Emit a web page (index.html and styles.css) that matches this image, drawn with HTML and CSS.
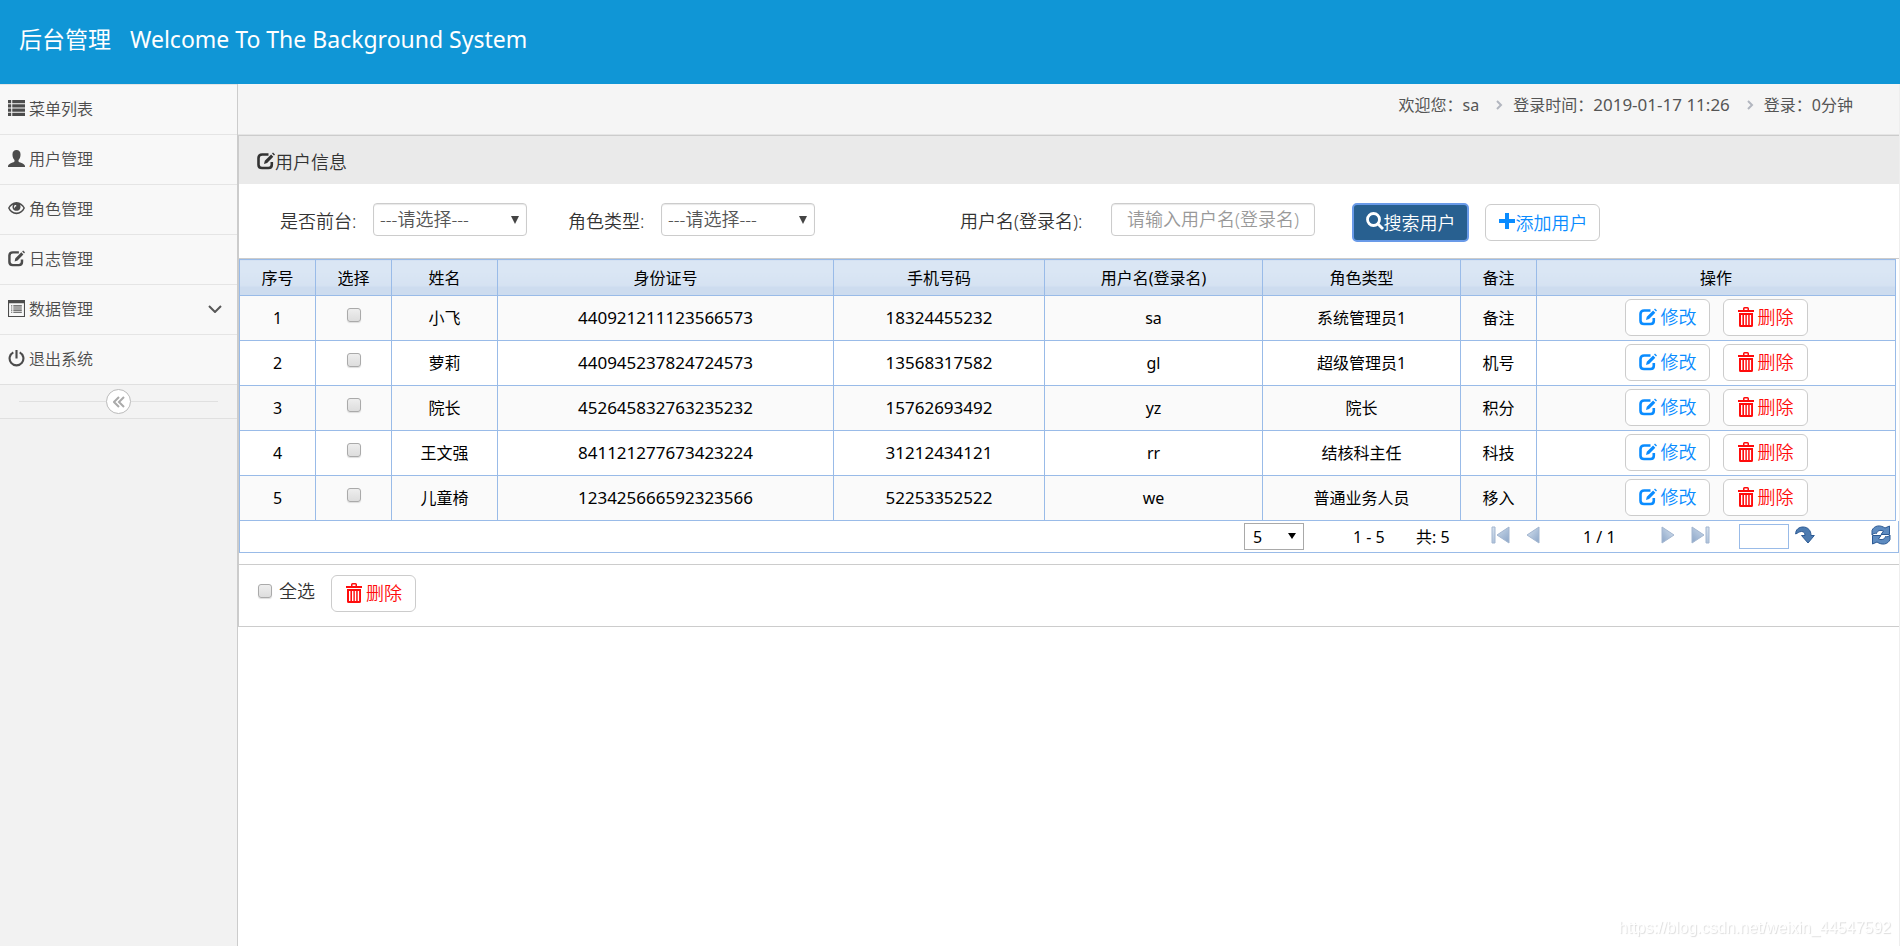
FILE: index.html
```html
<!DOCTYPE html>
<html lang="zh">
<head>
<meta charset="utf-8">
<title>后台管理</title>
<link rel="stylesheet" href="styles.css">
</head>
<body>
<svg class="sprite" aria-hidden="true">
  <symbol id="list" viewBox="0 0 16 16"><path d="M0 0h3v3H0zM4 0h12v3H4zM0 4h3v3H0zM4 4h12v3H4zM0 8h3v3H0zM4 8h12v3H4zM0 12h3v3H0zM4 12h12v3H4z"/></symbol>
  <symbol id="user" viewBox="0 0 16 16"><path d="M8 0c2.400 0 3.800 1.600 3.800 4.200 0 2.200-.8 4.200-1.900 5.200v1.400c0 .7 5.600 1.700 6.100 4.200v1H0v-1c.5-2.500 6.100-3.500 6.100-4.200V9.400C5 8.400 4.200 6.400 4.200 4.200 4.200 1.600 5.600 0 8 0z"/></symbol>
  <symbol id="eye" viewBox="0 0 18 14"><path fill-rule="evenodd" d="M9 0c4 0 7 2.500 9 6.500C16 10.800 13 13 9 13S2 10.800 0 6.500C2 2.500 5 0 9 0zM5.200 3C3.600 3.900 2.500 5 1.700 6.500c1.600 3 4 4.800 7.300 4.800s5.700-1.800 7.300-4.800c-.8-1.500-1.900-2.600-3.500-3.500 1.500 4-1 6.500-3.800 6.500S3.700 7 5.200 3zM7 3.500C6.300 4.500 6 6 6.800 7c.2-1.500.9-2.200 2-2.400.3-1-.8-1.700-1.800-1.100z"/></symbol>
  <symbol id="edit" viewBox="0 0 18 17"><path fill="none" stroke="currentColor" stroke-width="2.600" d="M11.500 2H5.200Q1.500 2 1.500 5.500v6.800Q1.500 15.500 5 15.500h6.500q3.300 0 3.300-3.200V9.500"/><path d="M7 11.600l.8-3.300 6.300-6.300 2.200 2.200-6.200 6.400zM15 1.100L16 0l2 1.900-1 1.200z"/></symbol>
  <symbol id="table" viewBox="0 0 16 16"><path fill-rule="evenodd" d="M0 0h16v16H0zM1 3v12h14V3zM3 5h1v1H3zM5 5h8v1H5zM3 7h1v1H3zM5 7h8v1H5zM3 9h1v1H3zM5 9h8v1H5zM3 11h1v1H3zM5 11h8v1H5z"/></symbol>
  <symbol id="power" viewBox="0 0 16 16"><path fill="none" stroke="currentColor" stroke-width="2" d="M5 2.200a6.500 6.500 0 1 0 6 0"/><path d="M7 0h2v8H7z"/></symbol>
  <symbol id="search" viewBox="0 0 18 18"><circle cx="7.500" cy="7.500" r="6" fill="none" stroke="currentColor" stroke-width="2.800"/><path d="M10.500 12.500l2-2 5.500 5.500-2 2z"/></symbol>
  <symbol id="plus" viewBox="0 0 18 18"><path d="M7 1h4v6h6v4h-6v6H7v-6H1V7h6z"/></symbol>
  <symbol id="trash" viewBox="0 0 16 20"><path fill-rule="evenodd" d="M5 3V1.500Q5 0 6.500 0h3Q11 0 11 1.500V3h5v2H0V3zM6.500 3h3V1.500h-3zM1 6h14v12.500q0 1.500-1.500 1.500h-11Q1 20 1 18.500zM3 8v10h1.400V8zM6 8v10h1.400V8zM8.800 8v10h1.400V8zM11.700 8v10h1.400V8z"/></symbol>
  <linearGradient id="steel" x1="0" y1="0" x2="1" y2="1"><stop offset="0" stop-color="#d9e4f0"/><stop offset="1" stop-color="#8aa5c8"/></linearGradient>
  <symbol id="prev" viewBox="0 0 14 18"><path fill="url(#steel)" stroke="#a3b6d0" d="M13 1v16L1 9z"/></symbol>
  <symbol id="first" viewBox="0 0 19 18"><path fill="url(#steel)" stroke="#a3b6d0" d="M18 1v16L6 9zM1 1h3v16H1z"/></symbol>
  <symbol id="go" viewBox="0 0 20 18"><path fill="#4d7bb0" stroke="#2c5a94" d="M.7 8C.5 3.500 4 1 8 1c5 0 8 3.500 8 8.500h3.300L13 17 6.500 9.500H10C10 7 9 5.500 6.500 5.500 4 5.500 3 7 .7 8z"/></symbol>
  <symbol id="reload" viewBox="0 0 20 20"><path fill="#5e8bc0" stroke="#2c5a94" d="M1 10V5.500C3 .5 9-.5 14 3l4.500-2v8.500H10L12.500 6C9 4.500 6 6 5.500 8.500 4 8 2 8.500 1 10zM19 10v4.500C17 19.500 11 20.500 6 17l-4.500 2v-8.500H10L7.500 14c3.500 1.500 6.500 0 7-2.500 1.500.5 3.500 0 4.500-1.500z"/></symbol>
</svg>
<header class="top"><h1><span>后台管理</span><span>Welcome To The Background System</span></h1></header>
<div class="layout">
  <aside class="side">
    <nav>
      <a href="#"><svg class="ic"><use href="#list"/></svg>菜单列表</a>
      <a href="#"><svg class="ic"><use href="#user"/></svg>用户管理</a>
      <a href="#"><svg class="ic"><use href="#eye"/></svg>角色管理</a>
      <a href="#"><svg class="ic"><use href="#edit"/></svg>日志管理</a>
      <a href="#"><svg class="ic"><use href="#table"/></svg>数据管理<svg class="down" viewBox="0 0 14 8"><path d="M1 1l6 6 6-6"/></svg></a>
      <a href="#"><svg class="ic"><use href="#power"/></svg>退出系统</a>
    </nav>
    <div class="collapse"><button type="button" aria-label="收起"><svg viewBox="0 0 12 12"><path d="M6 1L1 6l5 5M11 1L6 6l5 5"/></svg></button></div>
  </aside>
  <main class="main">
    <div class="crumbs">
      <span>欢迎您：sa</span><svg class="sep" viewBox="0 0 7 10"><path d="M1 1l4 4-4 4"/></svg>
      <span>登录时间：<time>2019-01-17 11:26</time></span><svg class="sep" viewBox="0 0 7 10"><path d="M1 1l4 4-4 4"/></svg>
      <span>登录：0分钟</span>
    </div>
    <section class="panel">
      <h2><svg class="ic"><use href="#edit"/></svg>用户信息</h2>
      <form class="filter">
        <label for="front">是否前台:</label>
        <div class="pick front"><select id="front"><option>---请选择---</option></select></div>
        <label for="role">角色类型:</label>
        <div class="pick role"><select id="role"><option>---请选择---</option></select></div>
        <label for="login">用户名(登录名):</label>
        <input id="login" type="text" placeholder="请输入用户名(登录名)">
        <button type="button" class="btn search"><svg class="ic"><use href="#search"/></svg>搜索用户</button>
        <button type="button" class="btn add"><svg class="ic"><use href="#plus"/></svg>添加用户</button>
      </form>
      <table class="grid">
        <colgroup><col class="c-no"><col class="c-no"><col class="c-name"><col class="c-id"><col class="c-tel"><col class="c-login"><col class="c-role"><col class="c-no"><col></colgroup>
        <thead><tr><th>序号</th><th>选择</th><th>姓名</th><th>身份证号</th><th>手机号码</th><th>用户名(登录名)</th><th>角色类型</th><th>备注</th><th>操作</th></tr></thead>
        <tbody>
          <tr><td>1</td><td><input type="checkbox" aria-label="选择 1"></td><td>小飞</td><td class="num">440921211123566573</td><td class="num">18324455232</td><td>sa</td><td>系统管理员1</td><td>备注</td><td><div class="acts"><button type="button" class="btn edit"><svg class="ic"><use href="#edit"/></svg>修改</button><button type="button" class="btn del"><svg class="ic"><use href="#trash"/></svg>删除</button></div></td></tr>
          <tr><td>2</td><td><input type="checkbox" aria-label="选择 2"></td><td>萝莉</td><td class="num">440945237824724573</td><td class="num">13568317582</td><td>gl</td><td>超级管理员1</td><td>机号</td><td><div class="acts"><button type="button" class="btn edit"><svg class="ic"><use href="#edit"/></svg>修改</button><button type="button" class="btn del"><svg class="ic"><use href="#trash"/></svg>删除</button></div></td></tr>
          <tr><td>3</td><td><input type="checkbox" aria-label="选择 3"></td><td>院长</td><td class="num">452645832763235232</td><td class="num">15762693492</td><td>yz</td><td>院长</td><td>积分</td><td><div class="acts"><button type="button" class="btn edit"><svg class="ic"><use href="#edit"/></svg>修改</button><button type="button" class="btn del"><svg class="ic"><use href="#trash"/></svg>删除</button></div></td></tr>
          <tr><td>4</td><td><input type="checkbox" aria-label="选择 4"></td><td>王文强</td><td class="num">841121277673423224</td><td class="num">31212434121</td><td>rr</td><td>结核科主任</td><td>科技</td><td><div class="acts"><button type="button" class="btn edit"><svg class="ic"><use href="#edit"/></svg>修改</button><button type="button" class="btn del"><svg class="ic"><use href="#trash"/></svg>删除</button></div></td></tr>
          <tr><td>5</td><td><input type="checkbox" aria-label="选择 5"></td><td>儿童椅</td><td class="num">123425666592323566</td><td class="num">52253352522</td><td>we</td><td>普通业务人员</td><td>移入</td><td><div class="acts"><button type="button" class="btn edit"><svg class="ic"><use href="#edit"/></svg>修改</button><button type="button" class="btn del"><svg class="ic"><use href="#trash"/></svg>删除</button></div></td></tr>
        </tbody>
      </table>
      <div class="pager">
        <div class="pick size"><select aria-label="每页"><option>5</option></select></div>
        <span class="range">1 - 5</span><span class="total">共: 5</span>
        <button type="button" class="nav" aria-label="首页"><svg class="wide"><use href="#first"/></svg></button>
        <button type="button" class="nav" aria-label="上一页"><svg><use href="#prev"/></svg></button>
        <span class="page">1 / 1</span>
        <button type="button" class="nav flip" aria-label="下一页"><svg><use href="#prev"/></svg></button>
        <button type="button" class="nav flip" aria-label="末页"><svg class="wide"><use href="#first"/></svg></button>
        <input type="text" aria-label="页码">
        <button type="button" class="nav go" aria-label="跳转"><svg class="big"><use href="#go"/></svg></button>
        <button type="button" class="nav reload" aria-label="刷新"><svg class="big"><use href="#reload"/></svg></button>
      </div>
      <div class="bulk">
        <label><input type="checkbox">全选</label>
        <button type="button" class="btn del"><svg class="ic"><use href="#trash"/></svg>删除</button>
      </div>
    </section>
  </main>
</div>
<div class="mark">https://blog.csdn.net/weixin_44547592</div>
</body>
</html>
```
FILE: styles.css
```css
* { box-sizing: border-box; }
body {
  margin: 0;
  min-height: 100vh;
  display: flex;
  flex-direction: column;
  font: 16px/24px "Noto Sans", "Noto Sans CJK SC", sans-serif;
  color: #333;
  background: #fff;
}
button, input, select { font: inherit; color: inherit; margin: 0; }
.sprite { position: absolute; width: 0; height: 0; }
.ic { width: 18px; height: 18px; fill: currentColor; flex: none; }
.top { height: 84px; padding: 21px 19px; background: #1096d6; color: #fff; }
.top h1 { margin: 0; display: flex; gap: 19px; font-size: 23px; line-height: 36px; font-weight: 400; }
.layout { flex: 1; display: flex; }
.side { width: 238px; flex: none; background: #f2f2f2; border-right: 1px solid #ccc; font-weight: 350; }
.side a {
  display: flex; align-items: center; gap: 4px; height: 50px; padding: 0 15px 2px 8px;
  border-top: 1px solid #e5e5e5; background: #f8f8f8; color: #4c4c4c; text-decoration: none;
}
.side .ic { width: 17px; height: 17px; margin-bottom: 1px; }
.down { width: 14px; height: 8px; margin-left: auto; fill: none; stroke: #585858; stroke-width: 2; }
.collapse {
  height: 35px; display: flex; align-items: center; gap: 0; padding: 0 19px;
  border: solid #e0e0e0; border-width: 1px 0; background: #f3f3f3;
}
.collapse::before, .collapse::after { content: ""; flex: 1; height: 1px; background: #e0e0e0; }
.collapse button {
  width: 25px; height: 25px; padding: 0; border: 1px solid #bbb; border-radius: 50%; background: #fff;
  display: grid; place-items: center;
}
.collapse svg { width: 12px; height: 12px; fill: none; stroke: #aaa; stroke-width: 2; }
.main { flex: 1; min-width: 0; border-right: 1px solid #eee; }
.crumbs {
  height: 51px; display: flex; justify-content: flex-end; align-items: center; padding: 0 46px 8px 0;
  background: #f5f5f5; border-bottom: 1px solid #e5e5e5; color: #555;
}
time, .num { font-size: 17px; }
.sep { width: 7px; height: 10px; margin: 0 10px 0 17px; fill: none; stroke: #b2b6bf; stroke-width: 2; }
.panel { border: solid #ccc; border-width: 1px 0 1px 1px; }
.panel h2 {
  margin: 0; height: 48px; padding: 4px 18px 0; display: flex; align-items: center;
  font-size: 18px; font-weight: 350; background: #eaeaea;
}
.panel h2 .ic { margin-bottom: 3px; }
.filter { display: flex; height: 75px; padding: 19px 0 0 41px; font-size: 18px; font-weight: 350; border-bottom: 1px solid #ccc; }
.filter label { line-height: 36px; white-space: nowrap; width: 93px; flex: none; }
.filter label[for="login"] { width: 151px; }
.pick { position: relative; flex: none; }
.pick select { appearance: none; width: 100%; height: 100%; background: #fff; display: block; }
.pick::after {
  content: ""; position: absolute; right: 8px; top: 50%; margin-top: -4px;
  border: 4px solid transparent; border-top: 8px solid #444; border-bottom: 0; pointer-events: none;
}
.front, .role { width: 154px; height: 33px; margin-right: 41px; }
.role { margin-right: 145px; }
.front select, .role select { border: 1px solid #ccc; border-radius: 4px; padding: 0 6px 2px; color: #555; box-shadow: inset 0 1px 1px #e8e8e8; }
.filter input {
  width: 204px; height: 33px; padding: 0 15px 2px; border: 1px solid #ccc; border-radius: 4px;
  box-shadow: inset 0 1px 1px #e8e8e8; margin-right: 37px;
}
.filter input::placeholder { color: #999; }
.btn {
  display: inline-flex; align-items: center; justify-content: center; gap: 4px; height: 37px; padding: 0 12px;
  border: 1px solid #ccc; border-radius: 6px; background: #fff; font-size: 18px; font-weight: 350; white-space: nowrap;
}
.btn.search { width: 117px; height: 39px; gap: 0; margin-right: 16px; background: #286090; color: #fff; border: 2px solid #699ae8; border-radius: 5px; }
.btn.add { width: 115px; gap: 0; margin-top: 1px; color: #0a8cff; }
.search .ic, .add .ic { margin-bottom: 4px; }
.btn.edit, .btn.del { width: 85px; padding: 0 11px 1px 12px; }
.btn.edit { color: #0a8cff; }
.btn.del { color: #ff0c0c; }
.del .ic { width: 16px; height: 20px; }
.grid {
  width: calc(100% - 3px); table-layout: fixed; border-collapse: collapse; color: #000; text-align: center;
}
.c-no { width: 76px; } .c-name { width: 106px; } .c-id { width: 336px; } .c-tel { width: 211px; }
.c-login { width: 218px; } .c-role { width: 198px; }
.grid th, .grid td { border: 1px solid #99bbe8; padding: 0; font-weight: 400; }
.grid th { height: 36px; background: linear-gradient(#dae6f4 0 30%, #d5e2f2 75%, #cddcef 75%); }
.grid td { height: 45px; }
.grid tbody tr:nth-child(odd) { background: #fafafa; }
.acts { display: flex; justify-content: center; gap: 13px; padding-bottom: 2px; }
input[type="checkbox"] {
  appearance: none; width: 14px; height: 14px; border: 1px solid #aaa; border-radius: 3px;
  background: linear-gradient(#eee, #ddd); box-shadow: 0 1px 1px #ddd;
}
.grid input { display: block; margin: 0 auto 7px; }
.pager {
  display: flex; align-items: center; height: 32px; padding: 0 7px 0 0; color: #000;
  border: solid #99bbe8; border-width: 0 1px 1px 1px; justify-content: flex-end;
}
.size { width: 60px; height: 27px; margin-right: 49px; }
.size select { border: 1px solid #a9a9a9; padding: 0 8px; }
.size::after { border-top-color: #000; border-width: 6px 4px 0; }
.range { width: 63px; } .total { width: 75px; } .page { width: 78px; }
.nav { padding: 0 0 3px; border: 0; background: none; display: grid; }
.nav svg { width: 14px; height: 18px; }
.nav .wide { width: 19px; }
.nav .big { width: 20px; height: 20px; }
.nav + .nav { margin-left: 16px; }
.nav + .page { margin-left: 43px; }
.flip { transform: scaleX(-1); }
.pager input { width: 50px; height: 25px; margin-left: 29px; border: 1px solid #99bbe8; }
.nav.go { margin-left: 6px; }
.nav.reload { margin-left: 56px; }
.bulk { margin-top: 11px; height: 62px; padding: 10px 19px; display: flex; gap: 16px; border-top: 1px solid #ccc; }
.bulk label { display: flex; align-items: center; gap: 7px; height: 32px; font-size: 18px; font-weight: 350; }
.mark {
  position: fixed; right: 9px; bottom: 6px; color: #fff; text-shadow: 1px 1px 1px #ddd;
  font: 16px/24px "Liberation Sans", sans-serif;
}
```
